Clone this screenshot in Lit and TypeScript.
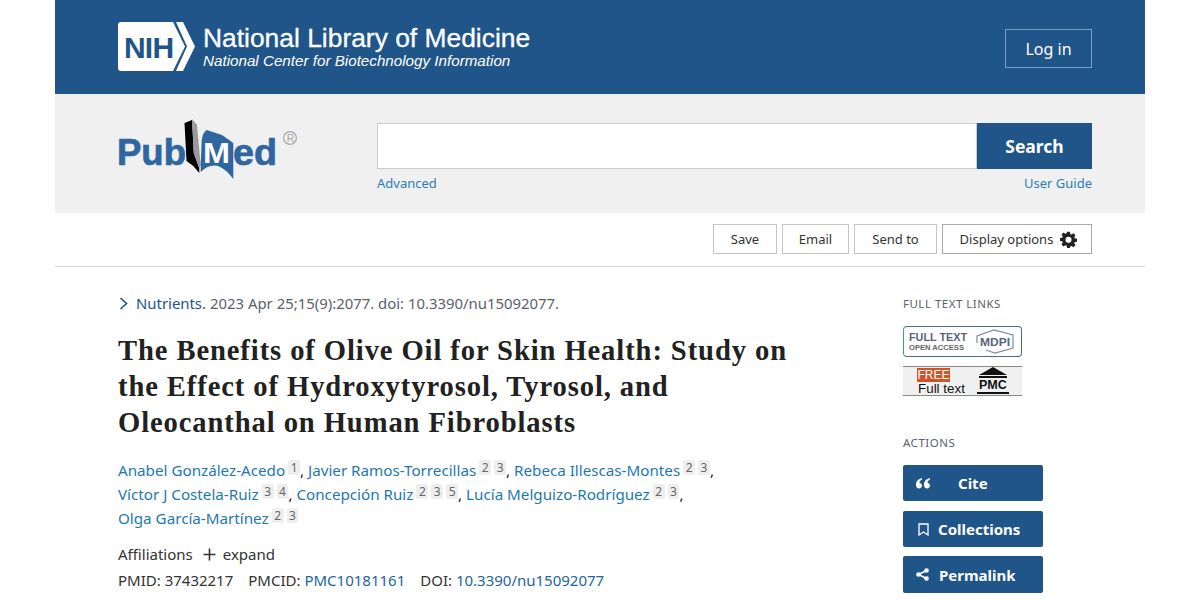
import { LitElement, html, css, svg } from "lit";
import { customElement } from "lit/decorators.js";

const sup = (nums: string[]) => nums.map((n) => html`<span class="sup">${n}</span>`);

@customElement("app-root")
export class AppRoot extends LitElement {
  static styles = css`
    :host { display: block; width: 1200px; height: 600px; overflow: hidden; background: #fff; font-family: "Noto Sans", "Open Sans", sans-serif; color: #212121; }
    .page { margin: 0 55px; width: 1090px; }
    .top { height: 94px; background: #20558a; display: flex; align-items: flex-start; justify-content: space-between; padding: 22px 53px 0 63px; box-sizing: border-box; color: #fff; }
    .brand { display: flex; gap: 8px; }
    .wm { display: flex; flex-direction: column; font-family: "Liberation Sans", Arial, sans-serif; }
    .wm b { font-weight: 400; font-size: 26.4px; line-height: 32px; -webkit-text-stroke: 0.3px #fff; }
    .wm i { font-size: 15.2px; line-height: 17px; margin-top: -2px; }
    .login { margin-top: 7px; width: 87px; height: 39px; box-sizing: border-box; border: 1px solid #7a9dc0; display: flex; align-items: center; justify-content: center; font-size: 16px; }
    .search { height: 119px; background: #f0f0f0; display: flex; padding: 29px 53px 0 63px; box-sizing: border-box; }
    .pm { width: 196px; margin: -6px 63px 0 0; flex: none; }
    .sbox { flex: 1; }
    .srow { display: flex; height: 46px; }
    .srow .inp { flex: 1; background: #fff; border: 1px solid #ccc; box-sizing: border-box; }
    .srow .btn { width: 115px; background: #20558a; color: #fff; font-weight: 700; font-size: 17.5px; display: flex; align-items: center; justify-content: center; }
    .slinks { display: flex; justify-content: space-between; font-size: 13px; line-height: 18px; margin-top: 5px; color: #2a7cb8; }
    .tools { height: 54px; border-bottom: 1px solid #d6d6d6; display: flex; justify-content: flex-end; gap: 5px; padding: 11px 53px 0 0; box-sizing: border-box; }
    .tool { height: 30px; box-sizing: border-box; border: 1px solid #c4c4c4; font-size: 13px; color: #333; display: flex; align-items: center; justify-content: center; gap: 7px; }
    .tool.d { padding-left: 3px; border-color: #aaa; }
    .main { display: flex; padding: 25px 0 0 63px; }
    .art { width: 785px; flex: none; }
    .cit { font-size: 14.9px; line-height: 22px; color: #5b616b; display: flex; align-items: center; }
    .cit svg { margin: 0 8px 0 1px; }
    .cit .j { color: #20558a; margin-right: 4px; }
    h1 { margin: 19px 0 0; font-family: "Liberation Serif", serif; font-size: 28.6px; line-height: 36px; font-weight: 700; color: #212121; width: 700px; letter-spacing: 0.9px; }
    .auth { margin-top: 17px; font-size: 15.2px; line-height: 24px; color: #212121; width: 640px; }
    .auth a { color: #1f77b4; }
    .sup { display: inline-block; background: #eee; color: #666; font-size: 12px; line-height: 15px; padding: 0 2.5px; border-radius: 2px; margin-left: 3px; vertical-align: 4px; }
    .aff { margin-top: 13px; font-size: 15px; line-height: 22px; display: flex; align-items: center; color: #333; }
    .aff svg { margin: 0 7px 0 10px; }
    .ids { margin-top: 4px; font-size: 15px; line-height: 22px; color: #333; display: flex; gap: 15px; }
    .ids a { color: #20669f; }
    .side { flex: none; width: 140px; margin-top: 5px; }
    .lab { font-size: 11.5px; line-height: 14px; color: #5b616b; letter-spacing: 0.5px; }
    .mdpi { margin-top: 15px; width: 119px; height: 31px; box-sizing: border-box; border: 1px solid #4e6a8a; border-left-color: #3d9a9e; border-radius: 4px; display: flex; align-items: center; justify-content: space-between; padding: 0 7px 0 5px; background: #fff; }
    .mdpi .t { display: flex; flex-direction: column; font-family: "Liberation Sans", sans-serif; font-weight: 700; color: #56647c; }
    .mdpi .t b { font-size: 10.8px; line-height: 11px; }
    .mdpi .t span { font-size: 7.6px; line-height: 9px; color: #666; }
    .pmc { margin-top: 9px; width: 119px; height: 30px; box-sizing: border-box; border-top: 1px solid #888; border-bottom: 1px solid #888; background: #f0f0f0; display: flex; padding-left: 14px; gap: 13px; font-family: "Liberation Sans", sans-serif; color: #111; }
    .pmc .l { display: flex; flex-direction: column; align-items: flex-start; padding-top: 1px; }
    .pmc .free { background: #d2532a; color: #fff; font-size: 12px; line-height: 14px; width: 33px; text-align: center; }
    .pmc .ft { font-size: 13.4px; line-height: 14px; margin-left: 1px; }
    .pmc .r { display: flex; flex-direction: column; align-items: center; font-weight: 700; font-size: 12.5px; line-height: 13px; width: 30px; }
    .pmc .r span { border-bottom: 2px solid #111; padding: 0 2px; }
    .acts { margin-top: 40px; }
    .act { margin-top: 10px; width: 140px; height: 36px; border-radius: 2px; background: #20558a; color: #fff; font-weight: 700; font-size: 15px; display: flex; align-items: center; box-sizing: border-box; padding-left: 13px; }
    .lab + .act { margin-top: 15px; }
    .act.c { padding-left: 15px; }
    .act.p { margin-top: 9px; height: 37px; }
    .act svg { flex: none; }
    .act .cite { margin-left: 28px; }
    .act .coll { margin-left: 9px; }
    .act .perm { margin-left: 10px; }
  `;

  private nih() {
    return html`<svg width="77" height="49" viewBox="0 0 77 49">
      <path d="M3 0H55L67 24.5L55 49H3Q0 49 0 46V3Q0 0 3 0Z" fill="#fff"/>
      <path d="M58 0H65L77 24.5L65 49H58L69 24.5Z" fill="#fff"/>
      <text x="6" y="36" font-family="Liberation Sans, sans-serif" font-size="30" font-weight="700" fill="#20558a" letter-spacing="-0.8">NIH</text>
    </svg>`;
  }

  private pubmed() {
    return html`<svg width="196" height="70" viewBox="0 0 196 70">
      <text x="-1" y="48" font-family="Liberation Sans, sans-serif" font-size="37" font-weight="700" fill="#2f66a1" stroke="#2f66a1" stroke-width="0.7" textLength="69" lengthAdjust="spacingAndGlyphs">Pub</text>
      <path d="M66.500 6L74 3L75.800 36L81.300 51V56L75.300 49L68.500 44Z" fill="#000"/>
      <path d="M74 2L79 8L82.700 48L81.300 52L75.800 36Z" fill="#9a9a9a"/>
      <path d="M82.700 48L83.700 23Q85 15 88.700 13L104 18L115.300 26V62Q108 52 100 49Q91 47 82.700 55Z" fill="#2f66a1"/>
      <text x="85" y="46" font-family="Liberation Sans, sans-serif" font-size="29" font-weight="700" fill="#fff" textLength="27" lengthAdjust="spacingAndGlyphs">M</text>
      <text x="115" y="48" font-family="Liberation Sans, sans-serif" font-size="37" font-weight="700" fill="#2f66a1" stroke="#2f66a1" stroke-width="0.7" textLength="44" lengthAdjust="spacingAndGlyphs">ed</text>
      <circle cx="172" cy="21" r="6.400" fill="none" stroke="#a8a8a8" stroke-width="1.200"/>
      <text x="168.700" y="25" font-family="Liberation Sans, sans-serif" font-size="10.500" fill="#a8a8a8">R</text>
    </svg>`;
  }

  private gear() {
    return svg`<svg width="17" height="17" viewBox="0 0 24 24"><path fill="#222" fill-rule="evenodd" d="M10 1h4l.6 3.100 1.800.8L19 3.100 21.900 6l-1.800 2.600.8 1.800L24 11v4l-3.100.6-.8 1.800 1.800 2.600-2.900 2.900-2.600-1.800-1.800.8L14 24h-4l-.6-3.100-1.800-.8L5 21.900 2.100 19l1.800-2.600-.8-1.800L0 14v-4l3.100-.6.8-1.800L2.100 5 5 2.100l2.600 1.800 1.800-.8zM12 8.200a4.300 4.300 0 1 0 0 8.600 4.300 4.300 0 0 0 0-8.600z"/></svg>`;
  }

  render() {
    return html`<div class="page">
      <div class="top">
        <div class="brand">${this.nih()}
          <div class="wm"><b>National Library of Medicine</b><i>National Center for Biotechnology Information</i></div>
        </div>
        <div class="login">Log in</div>
      </div>
      <div class="search">
        <div class="pm">${this.pubmed()}</div>
        <div class="sbox">
          <div class="srow"><div class="inp"></div><div class="btn">Search</div></div>
          <div class="slinks"><span>Advanced</span><span>User Guide</span></div>
        </div>
      </div>
      <div class="tools">
        <div class="tool" style="width:64px">Save</div>
        <div class="tool" style="width:67px">Email</div>
        <div class="tool" style="width:83px">Send to</div>
        <div class="tool d" style="width:150px"><span>Display options</span>${this.gear()}</div>
      </div>
      <div class="main">
        <div class="art">
          <div class="cit"><svg width="9" height="13" viewBox="0 0 9 13"><path d="M1.500 1L7.500 6.500L1.500 12" fill="none" stroke="#20558a" stroke-width="1.600"/></svg><span class="j">Nutrients.</span> 2023 Apr 25;15(9):2077. doi: 10.3390/nu15092077.</div>
          <h1>The Benefits of Olive Oil for Skin Health: Study on the Effect of Hydroxytyrosol, Tyrosol, and Oleocanthal on Human Fibroblasts</h1>
          <div class="auth">
            <a>Anabel González-Acedo</a>${sup(["1"])}, <a>Javier Ramos-Torrecillas</a>${sup(["2", "3"])}, <a>Rebeca Illescas-Montes</a>${sup(["2", "3"])},<br />
            <a>Víctor J Costela-Ruiz</a>${sup(["3", "4"])}, <a>Concepción Ruiz</a>${sup(["2", "3", "5"])}, <a>Lucía Melguizo-Rodríguez</a>${sup(["2", "3"])},<br />
            <a>Olga García-Martínez</a>${sup(["2", "3"])}
          </div>
          <div class="aff">Affiliations<svg width="13" height="13" viewBox="0 0 13 13"><path d="M6.500 0.500V12.500M0.500 6.500H12.500" stroke="#333" stroke-width="1.600"/></svg>expand</div>
          <div class="ids"><span>PMID: 37432217</span><span>PMCID: <a>PMC10181161</a></span><span>DOI: <a>10.3390/nu15092077</a></span></div>
        </div>
        <div class="side">
          <div class="lab">FULL TEXT LINKS</div>
          <div class="mdpi">
            <div class="t"><b>FULL TEXT</b><span>OPEN ACCESS</span></div>
            <svg width="38" height="25" viewBox="0 0 38 25"><path d="M1 14V7L18 1L37 6V19L19 24L10 21" fill="none" stroke="#7d8ba3" stroke-width="1.200"/><text x="4" y="17" font-family="Liberation Sans, sans-serif" font-size="11" font-weight="700" fill="#56647c" textLength="30" lengthAdjust="spacingAndGlyphs">MDPI</text></svg>
          </div>
          <div class="pmc">
            <div class="l"><span class="free">FREE</span><span class="ft">Full text</span></div>
            <div class="r"><svg width="30" height="12" viewBox="0 0 30 12"><path d="M15 0L29 8H1Z M1 9H29V11H1Z" fill="#111"/></svg><span>PMC</span></div>
          </div>
          <div class="acts">
            <div class="lab">ACTIONS</div>
            <div class="act"><svg width="14" height="11" viewBox="0 0 14 11"><path fill="#fff" d="M6 0C2.500 1 0 3 0 6.500C0 9 1.300 10.500 3 10.500C4.600 10.500 6 9.300 6 7.600C6 6 4.800 5 3.500 5C3.500 3.500 4.500 2.300 6 1.600ZM14 0C10.500 1 8 3 8 6.500C8 9 9.300 10.500 11 10.500C12.600 10.500 14 9.300 14 7.600C14 6 12.800 5 11.500 5C11.500 3.500 12.500 2.300 14 1.600Z"/></svg><span class="cite">Cite</span></div>
            <div class="act c"><svg width="11" height="13" viewBox="0 0 11 13"><path d="M1 1H10V12L5.500 9L1 12Z" fill="none" stroke="#fff" stroke-width="1.300"/></svg><span class="coll">Collections</span></div>
            <div class="act p"><svg width="13" height="13" viewBox="0 0 13 13"><path d="M10.500 2.500L2.500 6.500L10.500 10.500" stroke="#fff" stroke-width="1.400" fill="none"/><circle cx="10.500" cy="2.500" r="2.300" fill="#fff"/><circle cx="2.500" cy="6.500" r="2.300" fill="#fff"/><circle cx="10.500" cy="10.500" r="2.300" fill="#fff"/></svg><span class="perm">Permalink</span></div>
          </div>
        </div>
      </div>
    </div>`;
  }
}
